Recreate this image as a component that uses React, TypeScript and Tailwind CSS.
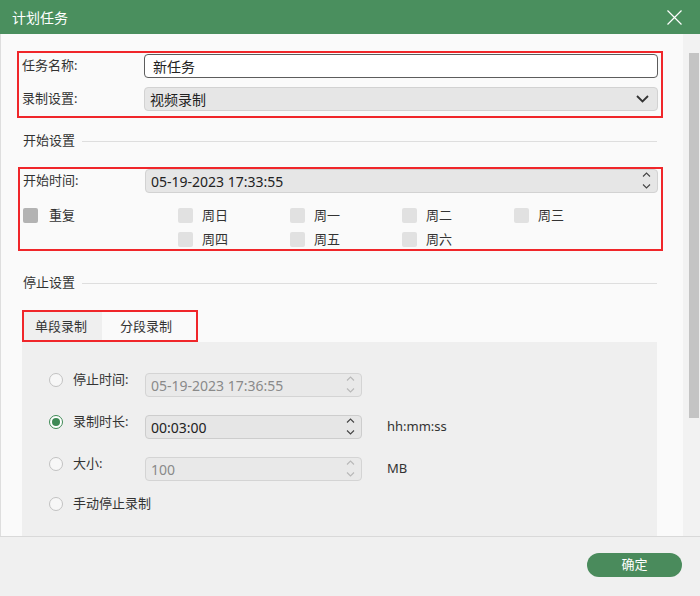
import React from 'react';

const FONT = { fontFamily: '"Noto Sans", "Noto Sans CJK SC", sans-serif' };

const Spinner: React.FC<{ disabled?: boolean }> = ({ disabled }) => {
  const c = disabled ? '#b8b8b8' : '#444';
  return (
    <div className="flex flex-col items-center justify-between self-stretch pt-[2px] pb-[3px] pr-[6px]">
      <svg width="9" height="5" viewBox="0 0 9 5" fill="none">
        <path d="M1 4.5L4.5 1L8 4.5" stroke={c} strokeWidth="1.1" />
      </svg>
      <svg width="9" height="5" viewBox="0 0 9 5" fill="none">
        <path d="M1 0.5L4.5 4L8 0.5" stroke={c} strokeWidth="1.1" />
      </svg>
    </div>
  );
};

const SectionTitle: React.FC<{ text: string }> = ({ text }) => (
  <div className="flex items-center h-[20px] pl-[22px] pr-[26px]">
    <span className="text-[13px] text-[#333]">{text}</span>
    <div className="flex-1 h-px bg-[#dedede] ml-[7px]" />
  </div>
);

const Check: React.FC<{ label: string; dark?: boolean }> = ({ label, dark }) => (
  <div className="flex items-center h-[15px]">
    <div className={`w-[15px] h-[15px] rounded-[2px] ${dark ? 'bg-[#b3b3b3]' : 'bg-[#e1e1e1]'}`} />
    <span className={`text-[13px] text-[#333] ${dark ? 'ml-[11px]' : 'ml-[9px]'}`}>{label}</span>
  </div>
);

const Radio: React.FC<{ checked?: boolean }> = ({ checked }) =>
  checked ? (
    <div className="w-[14px] h-[14px] rounded-full border-[1.5px] border-[#3f8a56] bg-white flex items-center justify-center">
      <div className="w-[8px] h-[8px] rounded-full bg-[#3f8a56]" />
    </div>
  ) : (
    <div className="w-[14px] h-[14px] rounded-full border border-[#c2c2c2] bg-[#f7f7f7]" />
  );

interface StopRow {
  label: string;
  value: string;
  unit?: string;
  checked?: boolean;
  disabled?: boolean;
}

const stopRows: StopRow[] = [
  { label: '停止时间:', value: '05-19-2023 17:36:55', disabled: true },
  { label: '录制时长:', value: '00:03:00', unit: 'hh:mm:ss', checked: true },
  { label: '大小:', value: '100', unit: 'MB', disabled: true },
];

const App: React.FC = () => {
  return (
    <div className="w-[700px] h-[596px] flex flex-col overflow-hidden bg-[#fafafa]" style={FONT}>
      {/* title bar */}
      <div className="h-[34px] bg-[#4a8f5e] flex items-center justify-between pl-[12px] pr-[18px] shrink-0">
        <span className="text-white text-[14px]">计划任务</span>
        <svg width="15" height="15" viewBox="0 0 15 15" fill="none">
          <path d="M0.5 0.5L14.5 14.5M14.5 0.5L0.5 14.5" stroke="#fff" strokeWidth="1.2" />
        </svg>
      </div>

      {/* body */}
      <div className="flex-1 flex min-h-0">
        <div className="flex-1 border-l border-[#dedede] overflow-hidden">
          {/* task name box */}
          <div className="ml-[16px] mt-[17px] w-[646px] border-2 border-[#f0262a] pt-[1px] pb-[5px] pl-[3px] pr-[3px] flex flex-col gap-[9px]">
            <div className="flex items-center">
              <span className="w-[122px] text-[13px] text-[#333]">任务名称:</span>
              <div className="flex-1 h-[24px] bg-white border border-[#5c5c5c] rounded-[4px] flex items-center pl-[8px] text-[14px] text-[#222]">
                新任务
              </div>
            </div>
            <div className="flex items-center">
              <span className="w-[122px] text-[13px] text-[#333]">录制设置:</span>
              <div className="flex-1 h-[24px] bg-[#e6e6e6] border border-[#d2d2d2] rounded-[4px] flex items-center justify-between pl-[5px] pr-[8px] text-[14px] text-[#222]">
                <span>视频录制</span>
                <svg width="13" height="8" viewBox="0 0 13 8" fill="none">
                  <path d="M1 1L6.5 6.5L12 1" stroke="#333" strokeWidth="1.8" />
                </svg>
              </div>
            </div>
          </div>

          <div className="mt-[13px]">
            <SectionTitle text="开始设置" />
          </div>

          {/* start box */}
          <div className="ml-[17px] mt-[16px] w-[645px] border-2 border-[#f0262a] pt-0 pb-[2px] pl-[3px] pr-[3px]">
            <div className="flex items-center">
              <span className="w-[122px] text-[13px] text-[#333]">开始时间:</span>
              <div className="flex-1 h-[24px] bg-[#e6e6e6] border border-[#d2d2d2] rounded-[4px] flex items-center justify-between pl-[5px] text-[14px] text-[#222]">
                <span>05-19-2023 17:33:55</span>
                <Spinner />
              </div>
            </div>
            <div className="flex mt-[15px]">
              <div className="w-[155px]">
                <Check label="重复" dark />
              </div>
              <div className="grid grid-cols-[112px_112px_112px_112px] gap-y-[9px]">
                <Check label="周日" />
                <Check label="周一" />
                <Check label="周二" />
                <Check label="周三" />
                <Check label="周四" />
                <Check label="周五" />
                <Check label="周六" />
              </div>
            </div>
          </div>

          <div className="mt-[22px]">
            <SectionTitle text="停止设置" />
          </div>

          {/* tabs */}
          <div className="ml-[21px] mt-[17px] w-[176px] h-[32px] border-2 border-[#f0262a] flex text-[13px] text-[#333]">
            <div className="w-[78px] bg-[#efefef] flex items-center pl-[11px] pt-[2px]">单段录制</div>
            <div className="flex-1 flex items-center pl-[18px] pt-[2px]">分段录制</div>
          </div>

          {/* tab panel */}
          <div className="ml-[21px] mr-[26px] bg-[#efefef] pt-[31px] pl-[27px] pb-[30px]">
            {stopRows.map((r, i) => (
              <div key={i} className="flex items-start mb-[18px]">
                <div className="flex items-center h-[14px]">
                  <Radio checked={r.checked} />
                  <span className="ml-[10px] w-[72px] text-[13px] text-[#333]">{r.label}</span>
                </div>
                <div
                  className={`w-[217px] h-[24px] rounded-[4px] border flex items-center justify-between pl-[5px] text-[14px] ${
                    r.disabled
                      ? 'bg-[#e9e9e9] border-[#d4d4d4] text-[#8a8a8a]'
                      : 'bg-[#e6e6e6] border-[#cdcdcd] text-[#222]'
                  }`}
                >
                  <span>{r.value}</span>
                  <Spinner disabled={r.disabled} />
                </div>
                {r.unit && (
                  <span className="ml-[25px] h-[24px] flex items-center text-[13px] text-[#333]">{r.unit}</span>
                )}
              </div>
            ))}
            <div className="flex items-center h-[14px] -mt-[2px]">
              <Radio />
              <span className="ml-[10px] text-[13px] text-[#333]">手动停止录制</span>
            </div>
          </div>
        </div>

        {/* scrollbar */}
        <div className="w-[17px] bg-[#f2f2f2] pt-[19px] pl-[6px] pr-[1px] shrink-0">
          <div className="h-[365px] bg-[#c4c4c4]" />
        </div>
      </div>

      {/* footer */}
      <div className="h-[60px] shrink-0 bg-[#f0f0f0] border-t border-[#d9d9d9] flex items-start justify-end pt-[16px] pr-[18px]">
        <button className="w-[95px] h-[24px] rounded-full bg-[#4a8b5c] text-white text-[13px] flex items-center justify-center">
          确定
        </button>
      </div>
    </div>
  );
};

export default App;
